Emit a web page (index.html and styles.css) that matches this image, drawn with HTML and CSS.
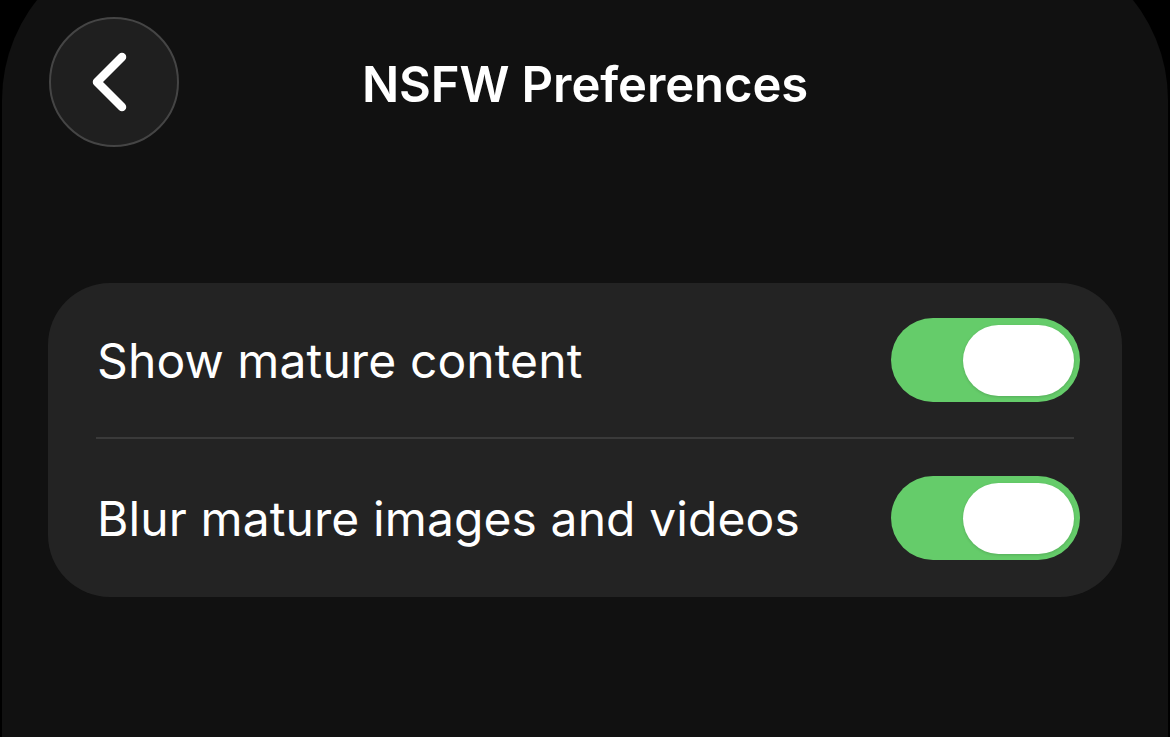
FILE: index.html
```html
<!DOCTYPE html>
<html lang="en">
<head>
<meta charset="utf-8">
<title>NSFW Preferences</title>
<link rel="stylesheet" href="styles.css">
</head>
<body>
<div class="sheet">
  <header class="header">
    <button class="back" aria-label="Back">
      <svg width="40" height="60" viewBox="0 0 40 60" aria-hidden="true">
        <path d="M31 5 L6 30 L31 55" fill="none" stroke="#fff" stroke-width="8.5" stroke-linecap="round" stroke-linejoin="round"/>
      </svg>
    </button>
    <h1 class="title">NSFW Preferences</h1>
    <div class="spacer"></div>
  </header>
  <section class="card">
    <div class="row row-first">
      <span class="label">Show mature content</span>
      <span class="toggle on"><span class="knob"></span></span>
    </div>
    <div class="divider"></div>
    <div class="row row-last">
      <span class="label">Blur mature images and videos</span>
      <span class="toggle on"><span class="knob"></span></span>
    </div>
  </section>
</div>
</body>
</html>
```

FILE: styles.css
```css
html, body {
  margin: 0;
  padding: 0;
  background: #000;
  height: 100%;
  overflow: hidden;
}

body {
  font-family: Inter, "Noto Sans", "Liberation Sans", sans-serif;
  color: #fff;
}

.sheet {
  margin: -60px 2px 0 2px;
  padding-top: 77px;
  background: #111111;
  border-radius: 160px 160px 0 0;
  height: 797px;
  box-sizing: border-box;
}

.header {
  display: grid;
  grid-template-columns: 1fr auto 1fr;
  align-items: center;
  padding: 0 47px;
}

.back {
  width: 130px;
  height: 130px;
  border-radius: 50%;
  background: #1f1f1f;
  border: 2px solid #454545;
  box-sizing: border-box;
  display: flex;
  align-items: center;
  justify-content: center;
  padding: 0 6px 0 0;
  margin: 0;
  justify-self: start;
}

.back svg {
  display: block;
}

.title {
  margin: 0;
  padding-top: 4px;
  font-size: 49px;
  font-weight: 600;
  letter-spacing: -0.1px;
  line-height: 1;
  text-align: center;
}

.card {
  margin: 136px 46px 0 46px;
  background: #232323;
  border-radius: 62px;
  display: flex;
  flex-direction: column;
}

.row {
  display: flex;
  align-items: center;
  justify-content: space-between;
  padding: 0 42px 0 49px;
}

.row-first {
  height: 154px;
}

.row-last {
  height: 158px;
}

.label {
  font-size: 48px;
  font-weight: 400;
  letter-spacing: 0.1px;
}

.divider {
  height: 2px;
  background: #3a3a3a;
  margin: 0 48px;
}

.toggle {
  width: 189px;
  height: 84px;
  border-radius: 42px;
  background: #65cc6a;
  display: flex;
  align-items: center;
  justify-content: flex-end;
  padding-right: 6px;
  box-sizing: border-box;
}

.knob {
  width: 111px;
  height: 71px;
  border-radius: 36px;
  background: #fff;
  box-shadow: 0 1px 3px rgba(0, 0, 0, 0.15);
}
```
